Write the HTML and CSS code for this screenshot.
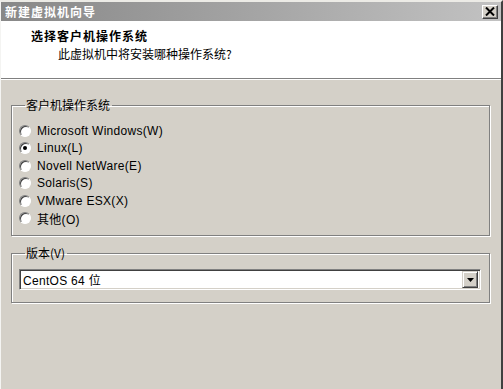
FILE: index.html
```html
<!DOCTYPE html>
<html lang="zh-CN">
<head>
    <meta charset="UTF-8">
    <title>新建虚拟机向导</title>
    <link rel="stylesheet" href="styles.css">
</head>
<body>
    <div class="window">
        <div class="titlebar">
            <span class="title">新建虚拟机向导</span>
            <span class="close-btn">
                <svg width="10" height="9" viewBox="0 0 10 9">
                    <path d="M1 0.5 L9 8.5 M9 0.5 L1 8.5" stroke="#000" stroke-width="2"/>
                </svg>
            </span>
        </div>

        <div class="header">
            <div class="header-title">选择客户机操作系统</div>
            <div class="header-sub">此虚拟机中将安装哪种操作系统?</div>
        </div>

        <div class="content">
            <fieldset class="group">
                <legend>客户机操作系统</legend>
                <label class="radio"><span class="dot"></span>Microsoft Windows(W)</label>
                <label class="radio checked"><span class="dot"></span>Linux(L)</label>
                <label class="radio"><span class="dot"></span>Novell NetWare(E)</label>
                <label class="radio"><span class="dot"></span>Solaris(S)</label>
                <label class="radio"><span class="dot"></span>VMware ESX(X)</label>
                <label class="radio"><span class="dot"></span>其他(O)</label>
            </fieldset>

            <fieldset class="group version">
                <legend>版本(V)</legend>
                <div class="combo">
                    <span class="combo-text">CentOS 64 位</span>
                    <span class="combo-btn">
                        <svg width="7" height="4" viewBox="0 0 7 4">
                            <path d="M0 0 H7 L3.5 4 Z" fill="#000"/>
                        </svg>
                    </span>
                </div>
            </fieldset>
        </div>
    </div>
</body>
</html>
```

FILE: styles.css
```css
* {
    margin: 0;
    padding: 0;
    box-sizing: border-box;
}

body {
    font-family: "Liberation Sans", "Noto Sans CJK SC", sans-serif;
    font-size: 12px;
    color: #000;
    background: #d4d0c8;
}

.window {
    width: 503px;
    height: 389px;
    display: flex;
    flex-direction: column;
    background: #d4d0c8;
    border-top: 2px solid #ecebe6;
    border-left: 1px solid #f4f4f2;
    border-right: 2px solid #404040;
}

.titlebar {
    height: 19px;
    display: flex;
    align-items: center;
    justify-content: space-between;
    padding: 0 3px 0 4px;
    background: linear-gradient(90deg, #888888 0%, #a4a4a4 50%, #c2c2c2 100%);
}

.title {
    color: #fff;
    font-weight: bold;
    font-family: "Noto Sans CJK SC", sans-serif;
    font-size: 12px;
    letter-spacing: 1px;
}

.close-btn {
    width: 16px;
    height: 14px;
    display: flex;
    align-items: center;
    justify-content: center;
    background: #d4d0c8;
    border: 1px solid;
    border-color: #fff #404040 #404040 #fff;
    box-shadow: inset -1px -1px 0 #808080;
}

.header {
    height: 58px;
    background: #fff;
    padding: 7px 0 0 30px;
    border-bottom: 1px solid #808080;
    box-shadow: 0 1px 0 #fff;
    font-family: "Noto Sans CJK SC", sans-serif;
}

.header-title {
    font-weight: bold;
    letter-spacing: 1px;
    line-height: 16px;
}

.header-sub {
    padding-left: 27px;
    line-height: 18px;
    margin-top: 1px;
}

.content {
    padding: 18px 11px 0 10px;
}

.group {
    border: 1px solid #808080;
    box-shadow: inset 1px 1px 0 #fff, 1px 1px 0 #fff;
    padding: 9px 8px 8px 7px;
}

.group legend {
    margin-left: 6px;
    padding: 0 2px 0 1px;
    line-height: 16px;
    font-family: "Noto Sans CJK SC", sans-serif;
}

.radio {
    display: flex;
    align-items: center;
    height: 17.5px;
    gap: 6px;
    letter-spacing: 0.3px;
}

.dot {
    width: 12px;
    height: 12px;
    border-radius: 50%;
    background: #fff;
    border: 1px solid;
    border-color: #808080 #fff #fff #808080;
    box-shadow: inset 1px 1px 0 #404040;
    position: relative;
}

.radio.checked .dot::after {
    content: "";
    position: absolute;
    left: 3px;
    top: 3px;
    width: 4px;
    height: 4px;
    border-radius: 50%;
    background: #000;
}

.version {
    margin-top: 9px;
    padding: 8px 8px 12px 7px;
}

.combo {
    height: 21px;
    display: flex;
    align-items: center;
    justify-content: space-between;
    background: #fff;
    border: 1px solid;
    border-color: #808080 #fff #fff #808080;
    box-shadow: inset 1px 1px 0 #404040, inset -1px -1px 0 #d4d0c8;
    padding: 0 2px 0 2px;
}

.combo-text {
    padding-left: 1px;
    letter-spacing: 0.3px;
}

.combo-btn {
    width: 16px;
    height: 17px;
    display: flex;
    align-items: center;
    justify-content: center;
    background: #d4d0c8;
    border: 1px solid;
    border-color: #d4d0c8 #404040 #404040 #d4d0c8;
    box-shadow: inset 1px 1px 0 #fff, inset -1px -1px 0 #808080;
}
```
